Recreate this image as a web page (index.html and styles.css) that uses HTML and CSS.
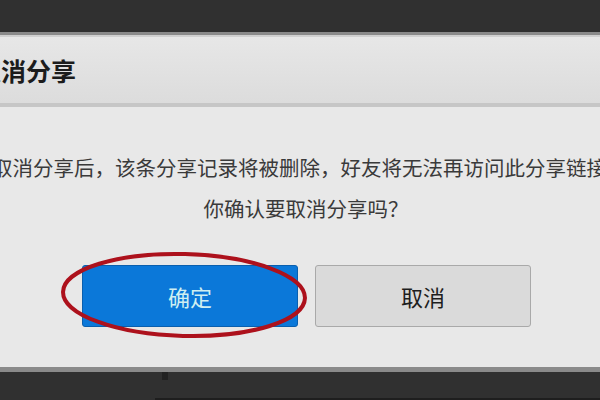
FILE: index.html
```html
<!DOCTYPE html>
<html lang="zh-CN">
<head>
    <meta charset="UTF-8">
    <meta name="viewport" content="width=device-width, initial-scale=1.0">
    <title>取消分享</title>
    <link rel="stylesheet" href="styles.css">
</head>
<body>
    <div class="topbar"></div>

    <div class="dialog">
        <div class="dialog-header">
            <h2 class="dialog-title">取消分享</h2>
        </div>

        <div class="dialog-body">
            <p class="msg msg-main">取消分享后，该条分享记录将被删除，好友将无法再访问此分享链接。</p>
            <p class="msg msg-confirm">你确认要取消分享吗？</p>

            <div class="actions">
                <button class="btn btn-primary">确定</button>
                <button class="btn btn-default">取消</button>
                <!-- red marker drawn over the confirm button -->
                <svg class="marker" width="252" height="92" viewBox="0 0 252 92">
                    <ellipse cx="126" cy="46" rx="121" ry="41" transform="rotate(1.5 126 46)"
                             fill="none" stroke="#ad111c" stroke-width="4"/>
                </svg>
            </div>
        </div>
    </div>

    <div class="bottombar">
        <div class="tick"></div>
        <div class="edge"></div>
    </div>
</body>
</html>
```

FILE: styles.css
```css
body {
    margin: 0;
    width: 600px;
    height: 400px;
    overflow: hidden;
    background-color: #303030;
    font-family: "Noto Sans CJK SC", "Liberation Sans", sans-serif;
}
.topbar {
    height: 32px;
    background-color: #303030;
}
.dialog {
    background-color: #e8e8e8;
    border-top: 3px solid #8a8a8a;
    border-bottom: 5px solid #8a8a8a;
}
.dialog-header {
    height: 66px;
    display: flex;
    align-items: center;
    border-top: 2px solid #d0d0d0;
    border-bottom: 4px solid #c6c6c6;
    background: linear-gradient(#e7e7e7, #dcdcdc);
}
.dialog-title {
    margin: 0 0 0 -24px;
    font-size: 25px;
    font-weight: bold;
    color: #1c1c1c;
    white-space: nowrap;
}
.dialog-body {
    padding: 40px 0 40px;
}
.msg {
    margin: 0;
    font-size: 20.5px;
    line-height: 41px;
    color: #3a3a3a;
    white-space: nowrap;
}
.msg-main {
    margin-left: -8px;
}
.msg-confirm {
    text-align: center;
    padding-left: 12px;
}
.actions {
    position: relative;
    display: flex;
    gap: 17px;
    margin-top: 36px;
    padding-left: 82px;
}
.btn {
    width: 216px;
    height: 62px;
    font-family: inherit;
    font-size: 22px;
    border-radius: 3px;
    cursor: pointer;
}
.btn-primary {
    background-color: #0b78d9;
    border: 1px solid #0a5fae;
    color: #cfeff1;
}
.btn-default {
    background-color: #dadada;
    border: 1px solid #a9a9a9;
    color: #1e1e1e;
}
.marker {
    position: absolute;
    left: 58px;
    top: -16px;
}
.bottombar {
    height: 28px;
    display: flex;
    flex-direction: column;
    justify-content: space-between;
}
.tick {
    width: 6px;
    height: 8px;
    margin-left: 162px;
    background-color: #222;
}
.edge {
    height: 2px;
    margin-left: 155px;
    background-color: #1e1e1e;
}
```
